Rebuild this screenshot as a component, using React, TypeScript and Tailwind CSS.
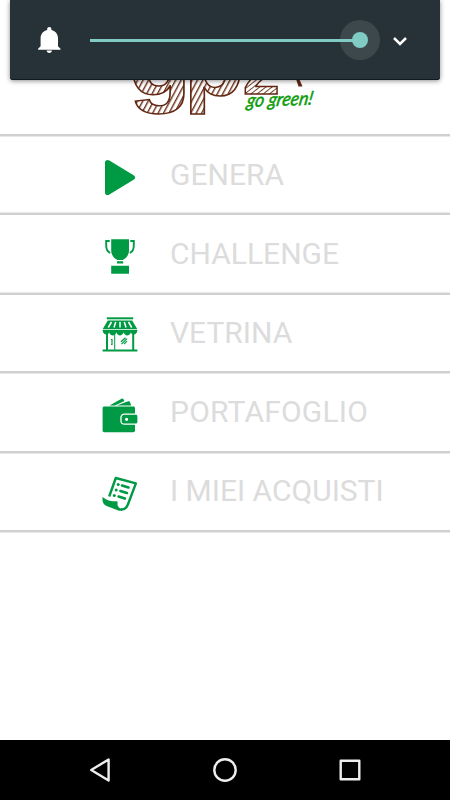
import React from "react";

const PlayIcon = () => (
  <svg width="36" height="40" viewBox="0 0 36 40" fill="#009a44">
    <path d="M3 5.5C3 3 5.4 2.200 7.400 3.500L32 18.600c1.600 1 1.600 2.800 0 3.800L7.400 37.500C5.400 38.800 3 38 3 35.500z" />
  </svg>
);

const TrophyIcon = () => (
  <svg className="mt-px" width="36" height="40" viewBox="0 0 36 40" fill="#009a44">
    <path d="M9.200 2.200h17.800v11.300c0 4.500-3 8-6.300 9.500h-5.200c-3.300-1.500-6.300-5-6.300-9.500z" />
    <path d="M7.700 4H4.200v4.500c0 3.500 1.200 6.200 4 7.500M28.300 4h3.500v4.500c0 3.500-1.200 6.200-4 7.500" fill="none" stroke="#009a44" strokeWidth="1.900" />
    <path d="M15 24.200h6.200v2.400H15zM9.200 28.800H27v7.900H9.200z" />
  </svg>
);

const ShopIcon = () => (
  <svg width="36" height="40" viewBox="0 0 36 40" fill="#009a44">
    <path d="M4.800 2.300h26.400v2H4.800z" />
    <path d="M5.800 5.400h24.400l5.200 8.800H.6z" />
    <path d="m9.500 7-3.200 5.500M13.700 7l-1.700 5.500M18 7v5.500M22.300 7l1.700 5.500M26.500 7l3.200 5.500" stroke="#fff" strokeWidth="1.500" />
    <path d="M.6 14.900h34.800c0 5.100-5.800 5.800-6.500 2.400-1.100 4.200-6.100 4.200-7.300 0-1.200 4.200-6 4.200-7.200 0-1.200 4.200-6.200 4.200-7.300 0C6.400 20.700.6 20 .6 14.900z" />
    <path d="M4 18h2v17H4zM30.200 18h2v17h-2zM.6 34.600h34.800v2H.6zM12.200 19h1v16h-1z" />
    <path d="M10 24v6M9 24.500h1.500M9 29.500h1.500" stroke="#009a44" strokeWidth="1.200" />
    <path d="m19 26.800 4.500-4M19.500 29.200l5.500-5.500M22 29.200l3-3" stroke="#009a44" strokeWidth="1.200" />
  </svg>
);

const WalletIcon = () => (
  <svg className="mt-[1.500px]" width="36" height="40" viewBox="0 0 36 40" fill="#009a44">
    <path d="m7.500 9.500 12-6.800c.9-.5 1.600-.2 2 .6l.9 1.700-9.400 4.500z" />
    <path d="m14.700 9.500 11.500-4.200c.8-.3 1.500 0 1.800.8l1.200 3.400z" />
    <path d="M2.300 10.600h29c1 0 1.700.7 1.700 1.700v5.300H22.500c-2.600 0-4.200 1.700-4.200 4v3.200c0 2.400 1.700 4 4.200 4H33v5.700c0 1-.7 1.700-1.700 1.700h-29c-1 0-1.700-.7-1.700-1.700V12.300c0-1 .7-1.700 1.700-1.700z" />
    <path fillRule="evenodd" d="M22.500 18.800h11.300c1 0 1.600.6 1.600 1.500v5.800c0 .9-.6 1.500-1.600 1.500H22.500c-1.800 0-2.900-1-2.900-2.700v-3.300c0-1.700 1.100-2.800 2.900-2.800zM24.600 21.700a1.600 1.600 0 1 0 0 3.200 1.600 1.600 0 0 0 0-3.200z" />
  </svg>
);

const ReceiptIcon = () => (
  <svg width="36" height="40" viewBox="0 0 36 40" fill="#009a44">
    <path d="M7.200 23.500 13.800 5l20.100 5.300-8 21.200c-1.500 4-3.600 5.300-7 5" fill="none" stroke="#009a44" strokeWidth="2.400" strokeLinejoin="round" />
    <path d="M.5 24c4 3.300 9 4.800 12.800 4.200 1.600-.3 2.600.4 2.300 1.800-.6 3 1 5 4.600 5.700v2c-2.700.6-6.200-.8-9-2.200-2.500-1.200-5.500-1.900-8-3.300C.9 31 .2 27.700.5 24z" />
    <path d="m20 12.500 6.500 2M18.400 18l6.500 2M16.600 23.500l6.300 2" stroke="#009a44" strokeWidth="2.600" strokeLinecap="round" />
    <circle cx="16.200" cy="11.500" r="1.500" />
    <circle cx="14.200" cy="17" r="1.500" />
    <circle cx="12.300" cy="22.500" r="1.500" />
  </svg>
);

const menu = [
  {
    label: "GENERA",
    icon: PlayIcon,
    row: "h-[79px] pt-[21px] shadow-[inset_0_-1px_#e8e8e8]",
    text: "",
  },
  {
    label: "CHALLENGE",
    icon: TrophyIcon,
    row: "h-[80px] pt-[21px] shadow-[inset_0_-1px_#e8e8e8]",
    text: "",
  },
  {
    label: "VETRINA",
    icon: ShopIcon,
    row: "h-[78px] pt-[20px] shadow-[0_1px_#e8e8e8]",
    text: "",
  },
  {
    label: "PORTAFOGLIO",
    icon: WalletIcon,
    row: "h-[80px] pt-[21px] shadow-[0_1px_#e8e8e8]",
    text: "tracking-[0.2px]",
  },
  {
    label: "I MIEI ACQUISTI",
    icon: ReceiptIcon,
    row: "h-[79px] pt-[20px] shadow-[0_1px_#e8e8e8]",
    text: "",
  },
];

const Logo = () => (
  <svg width="200" height="134" viewBox="125 0 200 134">
    <defs>
      <pattern id="hatch" width="4.800" height="8" patternUnits="userSpaceOnUse" patternTransform="rotate(28)">
        <rect width="4.800" height="8" fill="#fff" />
        <rect width="1.400" height="8" fill="#6b3018" />
      </pattern>
      <pattern id="hatchWide" width="3.800" height="8" patternUnits="userSpaceOnUse" patternTransform="rotate(52)">
        <rect width="3.800" height="8" fill="#fff" />
        <rect width="0.900" height="8" fill="#6b3018" />
      </pattern>
    </defs>
    <g fontFamily="Liberation Sans, sans-serif" fontWeight="700" stroke="#632611" strokeWidth="1.500">
      <text x="129" y="95" fontSize="90" textLength="62" lengthAdjust="spacingAndGlyphs" fill="url(#hatch)">g</text>
      <text x="184" y="95" fontSize="90" textLength="60" lengthAdjust="spacingAndGlyphs" fill="url(#hatch)">p</text>
      <text x="243" y="94" fontSize="66" fill="url(#hatchWide)">2</text>
    </g>
    <path d="m295 76 3.500 10.500h4L298 76z" fill="#632611" />
    <text
      x="246"
      y="107"
      fontFamily="Lato, sans-serif"
      fontStyle="italic"
      fontWeight="400"
      fontSize="19"
      textLength="66"
      lengthAdjust="spacingAndGlyphs"
      fill="#0b9b0b"
      stroke="#0b9b0b"
      strokeWidth="0.500"
      transform="rotate(-2 246 107) translate(22.700 0) skewX(-12)"
    >
      go green!
    </text>
  </svg>
);

const VolumePanel = () => (
  <div className="absolute left-[10px] top-0 flex h-20 w-[430px] items-center rounded-b-[3px] bg-[#273238] pl-[26px] shadow-[inset_0_-1px_#10191f,0_1px_5px_rgba(0,0,0,0.45)]">
    <svg className="shrink-0" width="26" height="30" viewBox="0 0 26 30" fill="#fff">
      <path d="M13.300 2c1.300 0 2.100.8 2.100 2v1c4.300 1 6.600 4.200 6.600 8.300v8l2.500 2.400v1H2.100v-1l2.500-2.400v-8C4.600 9.200 6.900 6 11.200 5V4c0-1.200.8-2 2.100-2zM10.700 25.500h5.200c0 1.400-1.100 2.500-2.600 2.500s-2.600-1.100-2.600-2.500z" />
    </svg>
    <div className="ml-7 flex w-[290px] shrink-0 items-center">
      <div className="h-[3px] w-[250px] bg-[#80cbc4]" />
      <div className="flex size-10 items-center rounded-full bg-[#3d484d]">
        <div className="h-[3px] w-[13px] bg-[#80cbc4]" />
        <div className="-ml-px size-4 rounded-full bg-[#80cbc4]" />
      </div>
    </div>
    <svg className="ml-[11px] mt-0.5 shrink-0" width="18" height="12" viewBox="0 0 18 12" fill="none" stroke="#fff" strokeWidth="2.500">
      <path d="m3 3 6 6 6-6" />
    </svg>
  </div>
);

const App = () => {
  return (
    <div className="relative flex h-[800px] w-[450px] flex-col overflow-hidden bg-white font-['Roboto',sans-serif]">
      <header className="flex h-[136px] justify-center border-b-2 border-[#d0d0d0] shadow-[0_1px_#e8e8e8]">
        <Logo />
      </header>

      <main className="flex-1">
        {menu.map(({ label, icon: Icon, row, text }) => (
          <div key={label} className={`flex items-start border-b-2 border-[#d0d0d0] pl-[102px] ${row}`}>
            <div className="shrink-0">
              <Icon />
            </div>
            <span className={`ml-8 whitespace-nowrap text-[30px] leading-9 text-[#dcdcdc] ${text}`}>{label}</span>
          </div>
        ))}
      </main>

      {/* Android navigation bar */}
      <footer className="flex h-[60px] items-center justify-between bg-black px-[85px]">
        <svg width="30" height="30" viewBox="0 0 30 30" fill="none" stroke="#eee" strokeWidth="2.400" strokeLinejoin="round">
          <path d="M23.600 4.500v21L6.200 15z" />
        </svg>
        <svg width="30" height="30" viewBox="0 0 30 30" fill="none" stroke="#eee" strokeWidth="2.400">
          <circle cx="15" cy="15" r="10.700" />
        </svg>
        <svg width="30" height="30" viewBox="0 0 30 30" fill="none" stroke="#eee" strokeWidth="2.400" strokeLinejoin="round">
          <path d="M5.700 5.700h18.600v18.600H5.700z" />
        </svg>
      </footer>

      <VolumePanel />
    </div>
  );
};

export default App;
